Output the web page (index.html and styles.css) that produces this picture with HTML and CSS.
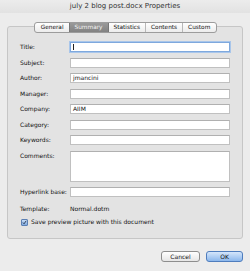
FILE: index.html
```html
<!DOCTYPE html>
<html lang="en">
<head>
    <meta charset="UTF-8">
    <title>july 2 blog post.docx Properties</title>
    <link rel="stylesheet" href="styles.css">
</head>
<body>
<div class="window">
    <div class="titlebar">july 2 blog post.docx Properties</div>

    <!-- Tabs -->
    <div class="tabs">
        <span class="tab">General</span>
        <span class="tab active">Summary</span>
        <span class="tab">Statistics</span>
        <span class="tab">Contents</span>
        <span class="tab">Custom</span>
    </div>

    <!-- Summary panel -->
    <div class="panel">
        <div class="form">
            <label>Title:</label><div class="field focus"><span class="caret"></span></div>
            <label>Subject:</label><div class="field"></div>
            <label>Author:</label><div class="field">jmancini</div>
            <label>Manager:</label><div class="field"></div>
            <label>Company:</label><div class="field">AIIM</div>
            <label>Category:</label><div class="field"></div>
            <label>Keywords:</label><div class="field"></div>
            <label>Comments:</label><div class="field area"></div>
            <label>Hyperlink base:</label><div class="field"></div>
        </div>
        <div class="template">
            <span class="tpl-label">Template:</span>
            <span>Normal.dotm</span>
        </div>
        <div class="check-row">
            <span class="checkbox">
                <svg width="7" height="7" viewBox="0 0 7 7"><path d="M1.3 3.6 L2.9 5.3 L5.9 1.1" fill="none" stroke="#1b2a44" stroke-width="1.2"/></svg>
            </span>
            <span>Save preview picture with this document</span>
        </div>
    </div>

    <!-- Buttons -->
    <div class="actions">
        <button class="btn">Cancel</button>
        <button class="btn btn-ok">OK</button>
    </div>
</div>
</body>
</html>
```

FILE: styles.css
```css
body { margin: 0; padding: 0; font-family: "DejaVu Sans", sans-serif; color: #222; }
.window { width: 250px; height: 271px; background: #ececec; display: flex; flex-direction: column; overflow: hidden; }
.titlebar { height: 13px; line-height: 13px; text-align: center; font-size: 7px; color: #333; background: linear-gradient(#ececec, #e2e2e2); }
.tabs { display: flex; align-self: center; margin-top: 9px; height: 9px; border: 1px solid #9c9c9c; border-radius: 3px; background: linear-gradient(#ffffff, #ececec); position: relative; z-index: 1; margin-left: 1px; }
.tab { font-size: 5.8px; line-height: 9px; padding: 0 5px; border-left: 1px solid #b8b8b8; color: #111; }
.tab:first-child { border-left: none; padding-left: 6px; }
.tab:last-child { padding-right: 6px; }
.tab.active { background: linear-gradient(#9a9a9a, #828282); color: #f4f4f4; border-left-color: #777; }
.tab.active + .tab { border-left-color: #777; }
.panel { margin: -7px 7px 0 7px; height: 213px; border: 1px solid #c6c6c6; border-radius: 3px; background: #e3e3e3; padding: 15px 12px 0 12px; box-sizing: border-box; }
.form { display: grid; grid-template-columns: 50px 160px; row-gap: 5.5px; align-items: start; }
.form label { font-size: 6px; line-height: 10px; color: #111; }
.field { height: 10px; box-sizing: border-box; background: #fff; border: 1px solid #c0c0c0; border-top-color: #b0b0b0; font-size: 6px; line-height: 8px; padding-left: 2px; color: #111; }
.field.area { height: 31px; }
.field.focus { border-color: #7ea8dd; box-shadow: 0 0 0 1px #a9c6ea; }
.caret { display: inline-block; width: 1px; height: 6px; background: #222; margin-top: 1px; }
.template { display: flex; font-size: 6px; margin-top: 8px; line-height: 8px; color: #111; }
.tpl-label { width: 50px; }
.check-row { display: flex; align-items: center; gap: 3px; margin-top: 5px; font-size: 6px; line-height: 8px; padding-left: 1px; color: #111; }
.checkbox { width: 7px; height: 7px; box-sizing: border-box; border: 1px solid #5b7fb3; border-radius: 1px; background: linear-gradient(#c7dcf5, #7ea9df); display: flex; align-items: center; justify-content: center; }
.checkbox svg { display: block; }
.actions { display: flex; justify-content: flex-end; gap: 6px; margin-top: 12px; padding-right: 7px; }
.btn { height: 11px; padding: 0; font-family: "DejaVu Sans", sans-serif; font-size: 6px; line-height: 9px; border: 1px solid #8e8e8e; border-radius: 3px; background: linear-gradient(#ffffff, #e6e6e6); color: #111; width: 39px; }
.btn-ok { width: 37px; border-color: #4f7dbd; background: linear-gradient(#d5e6fb, #8bb7ec); }
```
